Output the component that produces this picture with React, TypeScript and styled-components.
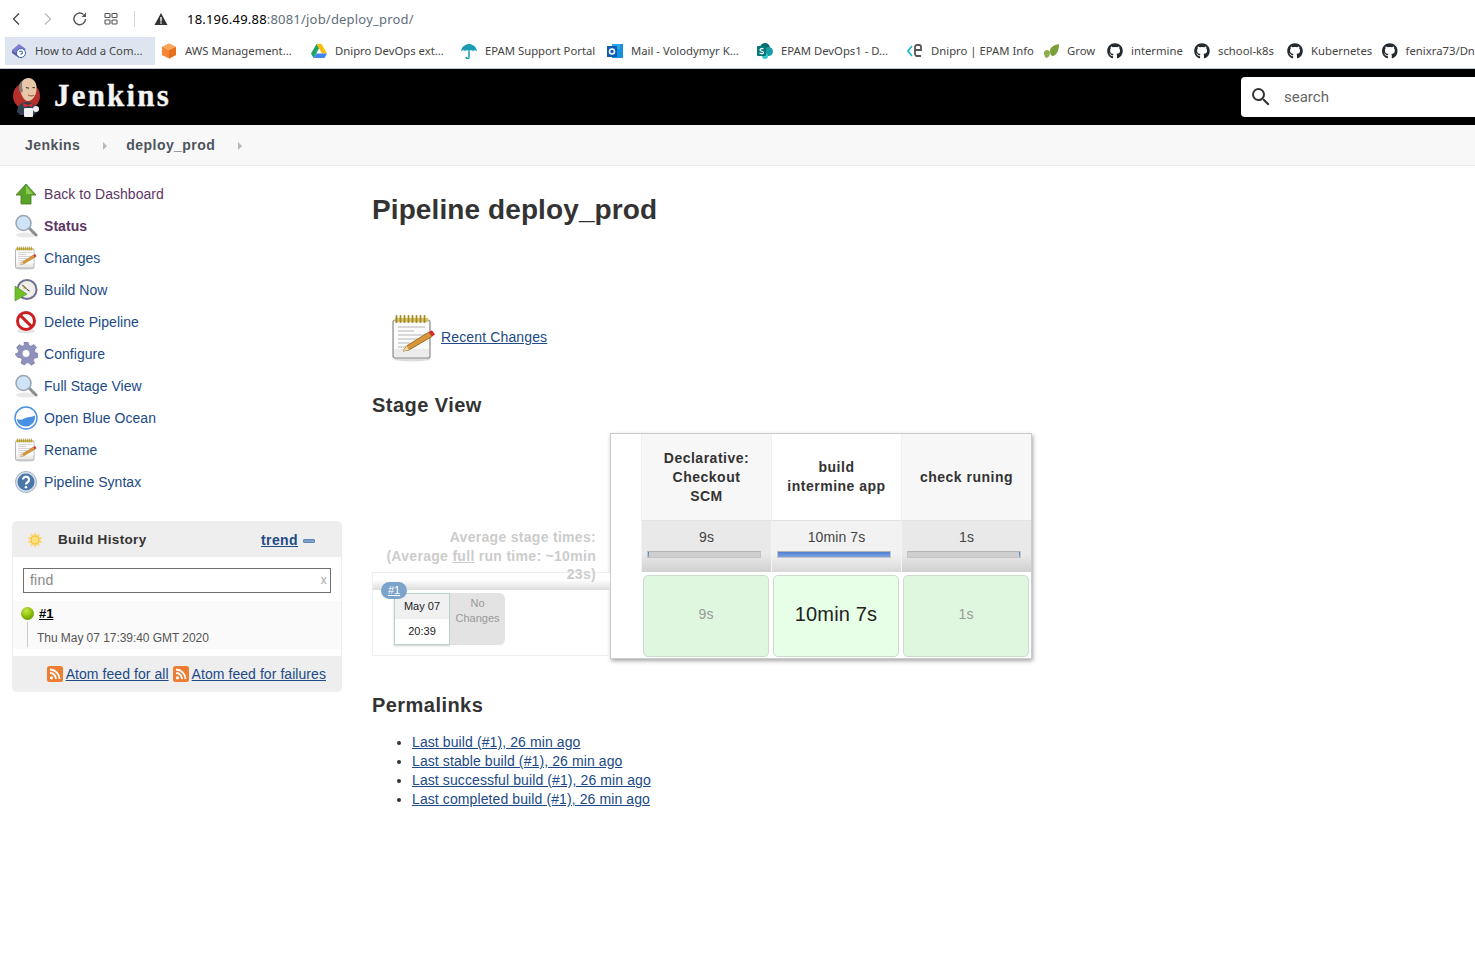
import React from 'react';
import styled, { createGlobalStyle } from 'styled-components';
import { FaGithub } from 'react-icons/fa';
import { MdSearch } from 'react-icons/md';

const GlobalStyle = createGlobalStyle`
  html, body {
    margin: 0;
    padding: 0;
    background: #fff;
    font-family: "Liberation Sans", Arial, sans-serif;
    color: #333;
    overflow: hidden;
  }
  a { color: #204a87; }
`;

const Page = styled.div`
  width: 1475px;
  height: 958px;
  overflow: hidden;
`;

const AddressBar = styled.div`
  display: flex;
  align-items: center;
  height: 37px;
  padding-left: 8px;
  box-sizing: border-box;
`;

const NavButton = styled.span<{ $w: number }>`
  display: flex;
  width: ${(p) => p.$w}px;
  align-items: center;
`;

const Divider = styled.span`
  width: 1px;
  height: 16px;
  background: #d5d5d5;
  margin-right: 19px;
`;

const Url = styled.div`
  margin-left: 19px;
  font: 13px/16px "Noto Sans", sans-serif;
  letter-spacing: 0.2px;
  color: #000;
  & > span {
    color: #5f6e7c;
  }
`;

const BookmarkBar = styled.div`
  display: flex;
  height: 28px;
  padding-left: 5px;
  overflow: hidden;
  white-space: nowrap;
`;

const Bookmark = styled.div<{ $w: number; $active?: boolean }>`
  flex: none;
  display: flex;
  align-items: center;
  gap: 8px;
  width: ${(p) => p.$w}px;
  box-sizing: border-box;
  padding-left: 6px;
  background: ${(p) => (p.$active ? '#dee5f0' : 'transparent')};
  font: 11.3px/16px "Noto Sans", sans-serif;
  color: #444;
`;

const Strip = styled.div`
  height: 4px;
  border-bottom: 1px solid #bcc8d6;
  box-sizing: border-box;
`;

const Header = styled.header`
  display: flex;
  align-items: center;
  justify-content: space-between;
  height: 56px;
  background: #000;
  overflow: hidden;
`;

const Brand = styled.div`
  display: flex;
  align-items: center;
  gap: 10px;
  padding-left: 12px;
`;

const BrandName = styled.span`
  margin-top: -2px;
  font: bold 31px/36px "Liberation Serif", serif;
  letter-spacing: 2.2px;
  -webkit-text-stroke: 0.3px #f4f4f4;
  color: #f4f4f4;
`;

const SearchBox = styled.div`
  flex: none;
  display: flex;
  align-items: center;
  gap: 11px;
  width: 260px;
  height: 40px;
  margin-right: -26px;
  padding-left: 8px;
  box-sizing: border-box;
  background: #fff;
  border-radius: 4px;
  font: 15px/18px Roboto, sans-serif;
  color: #666;
`;

const Breadcrumbs = styled.nav`
  display: flex;
  align-items: center;
  height: 41px;
  box-sizing: border-box;
  padding-left: 25px;
  background: #f8f8f8;
  border-bottom: 1px solid #ececec;
`;

const Crumb = styled.span`
  font: bold 14px/18px "Liberation Sans", sans-serif;
  letter-spacing: 0.45px;
  color: #4d545d;
`;

const CrumbArrow = styled.span`
  width: 0;
  height: 0;
  margin: 1px 19px 0 23px;
  border-left: 4px solid #b8b8b8;
  border-top: 4px solid transparent;
  border-bottom: 4px solid transparent;
`;

const Body = styled.div`
  display: flex;
`;

const Side = styled.aside`
  flex: none;
  width: 342px;
  padding: 12px 0 0 12px;
  box-sizing: border-box;
  margin-right: 30px;
`;

const Tasks = styled.div`
  display: flex;
  flex-direction: column;
  margin-bottom: 23px;
`;

const Task = styled.a<{ $visited?: boolean; $current?: boolean }>`
  display: flex;
  align-items: center;
  gap: 6px;
  height: 32px;
  padding-left: 2px;
  font-size: 14px;
  font-weight: ${(p) => (p.$current ? 'bold' : 'normal')};
  letter-spacing: 0.05px;
  color: ${(p) => (p.$visited ? '#5c3566' : '#204a87')};
  text-decoration: none;
`;

const HistoryPanel = styled.section`
  border: 1px solid #eee;
  border-radius: 5px;
  background: #fff;
`;

const HistoryHead = styled.div`
  display: flex;
  align-items: center;
  height: 35px;
  padding: 0 26px 0 14px;
  background: #eee;
  font-size: 13.5px;
  font-weight: bold;
  color: #333;
`;

const HistoryTitle = styled.span`
  flex: 1;
  margin-left: 15px;
  letter-spacing: 0.35px;
`;

const Trend = styled.a`
  font-size: 14px;
  font-weight: bold;
  letter-spacing: 0.4px;
`;

const TrendBar = styled.span`
  width: 12px;
  height: 4px;
  margin-left: 5px;
  margin-top: 2px;
  background: #7ba3cc;
  border: 1px solid #5f88b4;
  box-sizing: border-box;
  border-radius: 1px;
`;

const FindBox = styled.div`
  display: flex;
  justify-content: space-between;
  align-items: center;
  height: 25px;
  margin: 11px 10px 8px 10px;
  padding: 0 3px 1px 6px;
  box-sizing: border-box;
  border: 1px solid #6f6f6f;
  font-size: 14px;
  color: #888;
  letter-spacing: 0.2px;
`;

const Clear = styled.span`
  font-size: 12px;
  color: #aaa;
`;

const BuildRow = styled.div`
  position: relative;
  height: 48px;
  background: #fafafa;
  margin-bottom: 7px;
`;

const BuildTop = styled.div`
  display: flex;
  align-items: center;
  gap: 5px;
  height: 23px;
  padding: 1px 0 0 8px;
  box-sizing: border-box;
`;

const BuildLink = styled.a`
  font-size: 13px;
  font-weight: bold;
  color: #000;
`;

const Ball = styled.span`
  width: 13px;
  height: 13px;
  border-radius: 50%;
  background: radial-gradient(circle at 40% 30%, #c7e84a, #84b800 55%, #527a00);
`;

const Stem = styled.span`
  position: absolute;
  left: 14px;
  top: 21px;
  width: 1px;
  height: 25px;
  background: #ccc;
`;

const BuildTime = styled.div`
  margin: 6px 0 0 24px;
  font-size: 12px;
  line-height: 16px;
  letter-spacing: -0.05px;
  color: #555;
`;

const HistoryFoot = styled.div`
  display: flex;
  align-items: center;
  justify-content: flex-end;
  gap: 3px;
  height: 35px;
  padding-right: 14px;
  background: #eee;
  font-size: 14px;
  letter-spacing: 0.06px;
`;

const FeedLink = styled.a`
  margin-right: 1px;
`;

const Main = styled.main`
  flex: 1;
  padding-top: 27px;
`;

const Title = styled.h1`
  margin: 0;
  font-size: 28px;
  line-height: 34px;
  font-weight: bold;
  letter-spacing: 0.1px;
  color: #333;
`;

const RecentRow = styled.div`
  display: flex;
  align-items: center;
  gap: 3px;
  height: 48px;
  margin: 87px 0 0 18px;
  font-size: 14px;
  letter-spacing: 0.14px;
  & > a {
    margin-bottom: 2px;
  }
`;

const SectionTitle = styled.h2<{ $top: number }>`
  margin: ${(p) => p.$top}px 0 0;
  font-size: 20px;
  line-height: 24px;
  font-weight: bold;
  letter-spacing: 0.45px;
  color: #333;
`;

const StageView = styled.div`
  display: flex;
  margin-top: 16px;
`;

const StageLeft = styled.div`
  flex: none;
  width: 238px;
  padding-top: 95px;
`;

const AverageText = styled.div`
  position: relative;
  z-index: 1;
  height: 44px;
  padding-right: 14px;
  text-align: right;
  white-space: nowrap;
  font-size: 14px;
  line-height: 18.5px;
  font-weight: bold;
  letter-spacing: 0.3px;
  color: #ccc;
  & > u {
    text-decoration: underline;
  }
`;

const RunFrame = styled.div`
  position: relative;
  height: 84px;
  box-sizing: border-box;
  border: 1px solid #eee;
  border-right: none;
`;

const RunBand = styled.div`
  height: 17px;
  background: linear-gradient(#fff 40%, #ddd);
`;

const RunBadge = styled.span`
  position: absolute;
  left: 8px;
  top: 9px;
  width: 26px;
  height: 17px;
  border-radius: 9px;
  background: #7ba3cc;
  color: #fff;
  font-size: 11px;
  line-height: 17px;
  text-align: center;
  text-decoration: underline;
`;

const RunRow = styled.div`
  display: flex;
  margin: 3px 0 0 21px;
`;

const DateCard = styled.div`
  display: flex;
  flex-direction: column;
  width: 56px;
  height: 52px;
  box-sizing: border-box;
  border: 1px solid #b7d4c6;
  box-shadow: 0 1px 2px rgba(0, 0, 0, 0.2);
  background: #fff;
  font-size: 11px;
  color: #222;
  text-align: center;
`;

const DateLine = styled.div<{ $shaded?: boolean }>`
  flex: 1;
  line-height: 25px;
  background: ${(p) => (p.$shaded ? '#f0f0f0' : '#fff')};
`;

const NoChanges = styled.div`
  width: 55px;
  height: 52px;
  box-sizing: border-box;
  padding-top: 3px;
  border-radius: 0 6px 6px 0;
  background: #e3e3e3;
  font-size: 11px;
  line-height: 15px;
  color: #999;
  text-align: center;
`;

const StagePanel = styled.div`
  flex: none;
  display: grid;
  grid-template-columns: 30px repeat(3, 130px);
  grid-template-rows: 86px 52px 86px;
  width: 422px;
  box-sizing: border-box;
  background: #fff;
  border: 1px solid #ccc;
  box-shadow: 1px 2px 4px rgba(0, 0, 0, 0.35);
`;

const BlankCell = styled.div`
  grid-row: 1 / 4;
`;

const StageHead = styled.div<{ $focus?: boolean }>`
  display: flex;
  align-items: center;
  justify-content: center;
  box-sizing: border-box;
  background: ${(p) => (p.$focus ? '#fff' : '#f7f7f7')};
  border-left: 1px solid #f0f0f0;
  font-size: 14px;
  line-height: 19px;
  font-weight: bold;
  letter-spacing: 0.5px;
  text-align: center;
  color: #333;
`;

const StageAverage = styled.div<{ $focus?: boolean }>`
  box-sizing: border-box;
  padding-top: 8px;
  background: ${(p) =>
    p.$focus
      ? 'linear-gradient(#f2f2f2 65%, #d8d8d8)'
      : 'linear-gradient(#e9e9e9 65%, #d0d0d0)'};
  border-left: 1px solid #f4f4f4;
  border-top: 1px solid #e2e2e2;
  font-size: 14px;
  line-height: 17px;
  letter-spacing: 0.1px;
  text-align: center;
  color: #444;
`;

const Meter = styled.div<{ $align?: string }>`
  display: flex;
  justify-content: ${(p) => p.$align || 'flex-start'};
  height: 5px;
  margin: 5px 10px 0 5px;
  background: #cfcfcf;
  border: 1px solid #c4c4c4;
  border-top-color: #b4b4b4;
`;

const MeterFill = styled.div`
  background: linear-gradient(#4f7fd0, #7ba3e0);
`;

const StageCell = styled.div<{ $focus?: boolean }>`
  display: flex;
  align-items: center;
  justify-content: center;
  margin: 3px 2px 1px 2px;
  padding-bottom: 4px;
  border: 1px solid #ccdccc;
  border-radius: 5px;
  background: ${(p) => (p.$focus ? '#e6ffe6' : '#dff7df')};
  font-size: ${(p) => (p.$focus ? '20px' : '14px')};
  letter-spacing: 0.15px;
  color: ${(p) => (p.$focus ? '#222' : '#999')};
`;

const Permalinks = styled.ul`
  margin: 16px 0 0;
  padding-left: 40px;
  font-size: 14px;
  line-height: 19px;
  letter-spacing: 0.1px;
`;

const Magnifier = ({ size = 24 }: { size?: number }) => (
  <svg width={size} height={size} viewBox="0 0 24 24">
    <ellipse cx="12" cy="21" rx="10" ry="2.5" fill="#e8e8e8" />
    <line x1="15" y1="14" x2="22" y2="21" stroke="#8a8f94" strokeWidth="3" strokeLinecap="round" />
    <circle cx="9.5" cy="9" r="7.5" fill="#cfe3f7" stroke="#9aa7b4" strokeWidth="1.6" />
    <path d="M4 8a6 5 0 0 1 10-2a7 7 0 0 0-10 2z" fill="#fff" />
  </svg>
);

const Notepad = ({ size = 24 }: { size?: number }) => (
  <svg width={size} height={size} viewBox="0 0 48 48">
    <ellipse cx="22" cy="45" rx="18" ry="2.5" fill="#ddd" />
    <rect x="3" y="6" width="37" height="38" rx="2" fill="#ececec" stroke="#8c8c8c" strokeWidth="1.2" />
    <rect x="4" y="9" width="35" height="26" fill="#fbfbfb" />
    <rect x="5" y="4" width="33" height="4" fill="#d9c66a" />
    <path d="M6.500 2v6M10.500 2v6M14.500 2v6M18.500 2v6M22.500 2v6M26.500 2v6M30.500 2v6M34.500 2v6" stroke="#a08a20" strokeWidth="1.800" strokeLinecap="round" />
    <path d="M8 13h27M8 17h16M8 21h27M8 25h20M8 29h12M8 33h8" stroke="#b5b5b5" strokeWidth="1" />
    <path d="M13 37l3.500-5L39 18l3 4.500L19 36z" fill="#d9973a" stroke="#8a5a15" strokeWidth="0.8" />
    <path d="M13 37l3.500-5 2.500 4z" fill="#f0d9a8" />
    <path d="M39 18l3-1.800 3 4.300-3 2z" fill="#d7262b" />
  </svg>
);

const UpArrow = () => (
  <svg width="24" height="24" viewBox="0 0 24 24">
    <path d="M12 2L22 13H17V22H7V13H2z" fill="#5aa329" stroke="#3f7a19" strokeWidth="0.8" />
    <path d="M12 3.5L19 12H12z" fill="#8ccc52" />
  </svg>
);

const BuildClock = () => (
  <svg width="24" height="24" viewBox="0 0 24 24">
    <circle cx="13" cy="11.5" r="10.5" fill="#6f6f8f" />
    <circle cx="13" cy="11.5" r="8.5" fill="#efeeea" />
    <path d="M7 5l6 5-3 2z" fill="#e9d28a" />
    <path d="M13 11.5L8.5 7M13 11.5l2.5 1.5" stroke="#333" strokeWidth="1" />
    <path d="M1 8v15l12-7z" fill="#6fbf2a" stroke="#4c8f15" strokeWidth="0.6" />
  </svg>
);

const Forbidden = () => (
  <svg width="24" height="24" viewBox="0 0 24 24">
    <ellipse cx="12" cy="21" rx="9" ry="2.5" fill="#e5e5e5" />
    <circle cx="12" cy="11" r="8.5" fill="#fff" stroke="#cc1f1f" strokeWidth="3" />
    <line x1="6" y1="5.2" x2="18" y2="16.8" stroke="#cc1f1f" strokeWidth="3" />
  </svg>
);

const Gear = () => (
  <svg width="24" height="24" viewBox="0 0 24 24">
    <path
      d="M10 1h4l.7 3.3 2.3 1 2.9-1.8 2.6 3-2 2.7.6 2.4 3 1-.4 4-3.2.5-1.3 2.1 1.4 3-3.4 2-2.2-2.4h-2.4L10.400 24l-3.500-2 1.300-3-1.300-2.100L3.600 16.300 1.100 13l3-1.300.5-2.400-2-2.700 2.700-3 2.800 1.700 2.300-1z"
      fill="#8f91bd"
      stroke="#6c6e99"
      strokeWidth="0.6"
      transform="translate(0 -1)"
    />
    <circle cx="12" cy="11.500" r="4" fill="#fff" stroke="#6c6e99" strokeWidth="0.6" />
  </svg>
);

const Ocean = () => (
  <svg width="24" height="24" viewBox="0 0 24 24">
    <circle cx="12" cy="12" r="11" fill="#fff" stroke="#4a90e2" strokeWidth="1.4" />
    <path d="M3 13c5 2 7-1 10-1.500s6-1 8-2c.8 5-3 11-9 11s-9-4-9-7.500z" fill="#4a90e2" />
  </svg>
);

const Help = () => (
  <svg width="24" height="24" viewBox="0 0 24 24">
    <circle cx="12" cy="12" r="10.500" fill="#d8e2ec" stroke="#9db2c6" strokeWidth="1" />
    <circle cx="12" cy="12" r="8.500" fill="#4a76a8" />
    <path d="M9 9.500a3 3 0 1 1 4.500 2.700c-1 .6-1.500 1.100-1.500 2.300" fill="none" stroke="#fff" strokeWidth="2.200" />
    <circle cx="12" cy="17.200" r="1.300" fill="#fff" />
  </svg>
);

const Sun = () => (
  <svg width="16" height="16" viewBox="0 0 16 16">
    <path
      d="M8 0l1.500 3 3-1.500-.5 3.300 3.500.7-2.500 2.500 2.500 2.500-3.500.7.500 3.300-3-1.500L8 16l-1.500-3-3 1.500.5-3.300L.5 10.500 3 8 .5 5.500 4 4.800 3.500 1.500l3 1.500z"
      fill="#fbd77c"
    />
    <circle cx="8" cy="8" r="4" fill="#fbe27a" stroke="#f0a92a" strokeWidth="0.6" />
  </svg>
);

const Rss = () => (
  <svg width="16" height="16" viewBox="0 0 16 16">
    <rect width="16" height="16" rx="2.500" fill="#ec7d33" />
    <circle cx="4.500" cy="11.800" r="1.600" fill="#fff" />
    <path d="M3 7a6 6 0 0 1 6 6M3 3.500A9.500 9.500 0 0 1 12.500 13" fill="none" stroke="#fff" strokeWidth="1.800" />
  </svg>
);

const JenkinsLogo = () => (
  <svg width="32" height="42" viewBox="0 0 32 42">
    <circle cx="14.500" cy="20" r="13.500" fill="#b5302b" />
    <path d="M5 36c0-6 4-10 10-10s10 4 10 10l-3 3H8z" fill="#2f4152" />
    <path d="M8 13C7 6 12 2 16.500 2S25 6 24.500 13c0 6-4 12-8.500 12-4 0-7-6-8-12z" fill="#e8c6a8" />
    <path d="M7.500 15C6 9 8 6 10.500 5 9.500 8 10 12 11 15c-1 2-2.500 2-3.500 0z" fill="#8a8078" />
    <path d="M16 19c2 1.200 4 1.200 6 .2" stroke="#8a4a3a" strokeWidth="1" fill="none" />
    <path d="M14 11.500l3 .8M20.500 11.500l2.500.3" stroke="#333" strokeWidth="1.100" />
    <path d="M11 27l5 2 5-2-.6 4-4.400-1-4.400 1z" fill="#d9302c" />
    <rect x="12" y="32" width="9" height="9" rx="1" fill="#f2f2f2" />
    <circle cx="24" cy="33" r="3" fill="#eee" />
  </svg>
);

const BookmarkDoc = () => (
  <svg width="16" height="16" viewBox="0 0 16 16">
    <path d="M1 7l7-6 7 5-7 6z" fill="#7e7ed0" />
    <path d="M1 7l7 5v3L1 10z" fill="#5b5ba8" />
    <circle cx="10" cy="10" r="4.500" fill="#fff" stroke="#3a62b0" />
    <path d="M8.500 9a1.500 1.500 0 1 1 1.500 2v.8" fill="none" stroke="#3a62b0" strokeWidth="1.100" />
  </svg>
);

const BookmarkAws = () => (
  <svg width="16" height="16" viewBox="0 0 16 16">
    <path d="M8 .500l7 3.500v8l-7 3.500L1 12V4z" fill="#f58534" />
    <path d="M8 .500l7 3.500-7 3.500L1 4z" fill="#f9a65d" />
    <path d="M8 7.500v8l7-3.500V4z" fill="#e4701e" />
  </svg>
);

const BookmarkDrive = () => (
  <svg width="16" height="16" viewBox="0 0 16 16">
    <path d="M5.500 1h5L16 10.500h-5z" fill="#fbbc04" />
    <path d="M5.500 1L0 10.500 2.500 15 8 5.500z" fill="#1fa463" />
    <path d="M5 10.500h11L13.500 15h-11z" fill="#4285f4" />
  </svg>
);

const BookmarkUmbrella = () => (
  <svg width="16" height="16" viewBox="0 0 16 16">
    <path d="M0 8C1 3 5 1 8 1s7 2 8 7c-1.500-1-3-1-4 0-1-1-3-1-4 0-1-1-3-1-4 0-1-1-2.500-1-4 0z" fill="#1c9cb4" />
    <path d="M8 8v6a1.500 1.500 0 0 1-3 0" fill="none" stroke="#1c9cb4" strokeWidth="1.500" />
  </svg>
);

const BookmarkOutlook = () => (
  <svg width="16" height="16" viewBox="0 0 16 16">
    <rect x="5" y="1" width="11" height="14" fill="#1490df" />
    <rect x="5" y="1" width="8" height="5" fill="#28a8ea" />
    <rect y="3" width="10" height="11" fill="#0f5fb0" />
    <circle cx="5" cy="8.500" r="2.500" fill="none" stroke="#fff" strokeWidth="1.500" />
  </svg>
);

const BookmarkSharepoint = () => (
  <svg width="16" height="16" viewBox="0 0 16 16">
    <circle cx="8" cy="5" r="5" fill="#036c70" />
    <circle cx="11.500" cy="8.500" r="4.500" fill="#1a9ba1" />
    <circle cx="8" cy="13" r="3" fill="#37c6d0" />
    <rect y="3" width="9" height="10" rx="1" fill="#03787c" />
    <path d="M6.500 6C5 5 3 5.500 3 7s3.500 1 3.500 2.500S4 11 2.500 10" fill="none" stroke="#fff" strokeWidth="1.200" />
  </svg>
);

const BookmarkEpam = () => (
  <svg width="16" height="16" viewBox="0 0 16 16">
    <path d="M5 3L1 8l4 5" fill="none" stroke="#22b5d3" strokeWidth="1.800" />
    <path d="M14 13H10a2 2 0 0 1-2-2V4a2 2 0 0 1 2-2h2a2 2 0 0 1 2 2v3H8" fill="none" stroke="#555" strokeWidth="1.800" />
  </svg>
);

const BookmarkLeaf = () => (
  <svg width="16" height="16" viewBox="0 0 16 16">
    <path d="M1 9c2-3 5-2 6 0 0 3-1 5-3 6-2 0-3-3-3-6z" fill="#8cae4a" />
    <path d="M7 8c0-4 4-6 9-7 0 6-2 11-6 12-2 0-3-2-3-5z" fill="#7a9f38" />
  </svg>
);

const bookmarks: { label: string; width: number; icon: React.ReactNode; active?: boolean }[] = [
  { label: 'How to Add a Com...', width: 150, icon: <BookmarkDoc />, active: true },
  { label: 'AWS Management...', width: 150, icon: <BookmarkAws /> },
  { label: 'Dnipro DevOps ext...', width: 150, icon: <BookmarkDrive /> },
  { label: 'EPAM Support Portal', width: 146, icon: <BookmarkUmbrella /> },
  { label: 'Mail - Volodymyr K...', width: 150, icon: <BookmarkOutlook /> },
  { label: 'EPAM DevOps1 - D...', width: 150, icon: <BookmarkSharepoint /> },
  { label: 'Dnipro | EPAM Info', width: 136, icon: <BookmarkEpam /> },
  { label: 'Grow', width: 64, icon: <BookmarkLeaf /> },
  { label: 'intermine', width: 87, icon: <FaGithub size={16} color="#24292e" /> },
  { label: 'school-k8s', width: 93, icon: <FaGithub size={16} color="#24292e" /> },
  { label: 'Kubernetes', width: 95, icon: <FaGithub size={16} color="#24292e" /> },
  { label: 'fenixra73/Dnipro', width: 120, icon: <FaGithub size={16} color="#24292e" /> },
];

const tasks: { label: string; icon: React.ReactNode; visited?: boolean; current?: boolean }[] = [
  { label: 'Back to Dashboard', icon: <UpArrow />, visited: true },
  { label: 'Status', icon: <Magnifier />, visited: true, current: true },
  { label: 'Changes', icon: <Notepad /> },
  { label: 'Build Now', icon: <BuildClock /> },
  { label: 'Delete Pipeline', icon: <Forbidden /> },
  { label: 'Configure', icon: <Gear /> },
  { label: 'Full Stage View', icon: <Magnifier /> },
  { label: 'Open Blue Ocean', icon: <Ocean /> },
  { label: 'Rename', icon: <Notepad /> },
  { label: 'Pipeline Syntax', icon: <Help /> },
];

const stages = [
  { name: ['Declarative:', 'Checkout', 'SCM'], time: '9s', fill: 1, align: 'flex-start' },
  { name: ['build', 'intermine app'], time: '10min 7s', fill: 100, focus: true },
  { name: ['check runing'], time: '1s', fill: 1, align: 'flex-end' },
];

const permalinks = [
  'Last build (#1), 26 min ago',
  'Last stable build (#1), 26 min ago',
  'Last successful build (#1), 26 min ago',
  'Last completed build (#1), 26 min ago',
];

const App = () => {
  return (
    <Page>
      <GlobalStyle />
      <AddressBar>
        <NavButton $w={32}>
          <svg width="16" height="16" viewBox="0 0 16 16" fill="none" stroke="#444" strokeWidth="1.300">
            <path d="M11 2.500L5.500 8l5.500 5.500" />
          </svg>
        </NavButton>
        <NavButton $w={32}>
          <svg width="16" height="16" viewBox="0 0 16 16" fill="none" stroke="#bbb" strokeWidth="1.300">
            <path d="M5 2.500L10.500 8 5 13.500" />
          </svg>
        </NavButton>
        <NavButton $w={32}>
          <svg width="16" height="16" viewBox="0 0 16 16" fill="none" stroke="#555" strokeWidth="1.400">
            <path d="M13.500 8A5.800 5.800 0 1 1 11.500 3.500" />
            <path d="M14 1.500v4.500H9.500z" fill="#555" stroke="none" />
          </svg>
        </NavButton>
        <NavButton $w={30}>
          <svg width="14" height="14" viewBox="0 0 14 14" fill="none" stroke="#555" strokeWidth="1.100">
            <rect x="1" y="1.500" width="5" height="4" rx="0.800" />
            <rect x="8" y="1.500" width="5" height="4" rx="0.800" />
            <rect x="1" y="8" width="5" height="4" rx="0.800" />
            <rect x="8" y="8" width="5" height="4" rx="0.800" />
          </svg>
        </NavButton>
        <Divider />
        <svg width="14" height="14" viewBox="0 0 14 14">
          <path d="M7 1l6.500 12H.5z" fill="#333" />
          <rect x="6.300" y="5" width="1.400" height="4.500" fill="#fff" />
          <rect x="6.300" y="10.300" width="1.400" height="1.400" fill="#fff" />
        </svg>
        <Url>
          18.196.49.88<span>:8081/job/deploy_prod/</span>
        </Url>
      </AddressBar>
      <BookmarkBar>
        {bookmarks.map((b) => (
          <Bookmark key={b.label} $w={b.width} $active={b.active}>
            {b.icon}
            {b.label}
          </Bookmark>
        ))}
      </BookmarkBar>
      <Strip />
      <Header>
        <Brand>
          <JenkinsLogo />
          <BrandName>Jenkins</BrandName>
        </Brand>
        <SearchBox>
          <MdSearch size={24} color="#333" />
          search
        </SearchBox>
      </Header>
      <Breadcrumbs>
        <Crumb>Jenkins</Crumb>
        <CrumbArrow />
        <Crumb>deploy_prod</Crumb>
        <CrumbArrow />
      </Breadcrumbs>
      <Body>
        <Side>
          <Tasks>
            {tasks.map((t) => (
              <Task key={t.label} $visited={t.visited} $current={t.current}>
                {t.icon}
                {t.label}
              </Task>
            ))}
          </Tasks>
          <HistoryPanel>
            <HistoryHead>
              <Sun />
              <HistoryTitle>Build History</HistoryTitle>
              <Trend href="#">trend</Trend>
              <TrendBar />
            </HistoryHead>
            <FindBox>
              find
              <Clear>x</Clear>
            </FindBox>
            <BuildRow>
              <BuildTop>
                <Ball />
                <BuildLink href="#">#1</BuildLink>
              </BuildTop>
              <Stem />
              <BuildTime>Thu May 07 17:39:40 GMT 2020</BuildTime>
            </BuildRow>
            <HistoryFoot>
              <Rss />
              <FeedLink href="#">Atom feed for all</FeedLink>
              <Rss />
              <FeedLink href="#">Atom feed for failures</FeedLink>
            </HistoryFoot>
          </HistoryPanel>
        </Side>
        <Main>
          <Title>Pipeline deploy_prod</Title>
          <RecentRow>
            <Notepad size={48} />
            <a href="#">Recent Changes</a>
          </RecentRow>
          <SectionTitle $top={31}>Stage View</SectionTitle>
          <StageView>
            <StageLeft>
              <AverageText>
                Average stage times:
                <br />
                (Average <u>full</u> run time: ~10min
                <br />
                23s)
              </AverageText>
              <RunFrame>
                <RunBand />
                <RunBadge>#1</RunBadge>
                <RunRow>
                  <DateCard>
                    <DateLine $shaded>May 07</DateLine>
                    <DateLine>20:39</DateLine>
                  </DateCard>
                  <NoChanges>
                    No
                    <br />
                    Changes
                  </NoChanges>
                </RunRow>
              </RunFrame>
            </StageLeft>
            <StagePanel>
              <BlankCell />
              {stages.map((s) => (
                <StageHead key={s.time} $focus={s.focus}>
                  <div>
                    {s.name.map((line) => (
                      <div key={line}>{line}</div>
                    ))}
                  </div>
                </StageHead>
              ))}
              {stages.map((s) => (
                <StageAverage key={s.time} $focus={s.focus}>
                  {s.time}
                  <Meter $align={s.align}>
                    <MeterFill style={{ width: `${s.fill}%` }} />
                  </Meter>
                </StageAverage>
              ))}
              {stages.map((s) => (
                <StageCell key={s.time} $focus={s.focus}>
                  {s.time}
                </StageCell>
              ))}
            </StagePanel>
          </StageView>
          <SectionTitle $top={34}>Permalinks</SectionTitle>
          <Permalinks>
            {permalinks.map((p) => (
              <li key={p}>
                <a href="#">{p}</a>
              </li>
            ))}
          </Permalinks>
        </Main>
      </Body>
    </Page>
  );
};

export default App;
